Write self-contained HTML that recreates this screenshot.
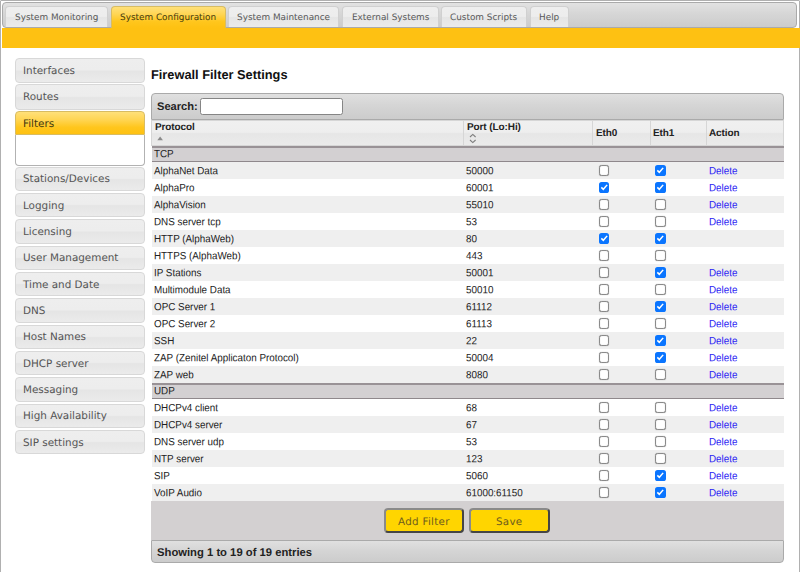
<!DOCTYPE html>
<html lang="en">
<head>
<meta charset="utf-8">
<title>Firewall Filter Settings</title>
<style>
html,body{margin:0;padding:0;background:#fff;}
body{width:800px;height:572px;overflow:hidden;position:relative;font-family:"Liberation Sans",sans-serif;color:#222;}
.v{font-family:"DejaVu Sans","Liberation Sans",sans-serif;}
#wrap{position:absolute;left:0;top:0;width:800px;height:572px;}
.t,.r i,.g span{display:inline-block;transform:matrix(1,0.0007,0,1,0,0);}
.r i,.g span{transform:matrix(1,0.0007,0,1.07,0,0);}
.abs{position:absolute;box-sizing:border-box;}
/* outer widget */
#outer{left:0;top:0;width:800px;height:700px;border:1px solid #b0b0b0;border-radius:1px 1px 0 0;background:#fff;}
/* tab header */
#nav{left:2.2px;top:2.2px;width:795.3px;height:25.6px;border:1px solid #aaa;border-radius:4px;background:linear-gradient(#e2e2e2 0%,#d6d6d6 45%,#cccccc 100%);}
.tab{top:5.8px;height:21.2px;border:1px solid #d0d0d0;border-bottom:0;border-radius:4px 4px 0 0;background:linear-gradient(#eeeeee 0%,#ededed 47%,#e5e5e5 53%,#ebebeb 100%);color:#585858;font-size:8.88px;line-height:11px;padding-top:5.2px;text-align:center;white-space:nowrap;}
.tab.on{top:5.8px;height:22.2px;border-color:#d8bc62;background:linear-gradient(#ffe07a 0%,#ffd553 35%,#ffc61c 70%,#fec112 100%);color:#43390f;padding-top:5.2px;}
#bar{left:2px;top:28px;width:798px;height:20.2px;background:#fec112;}
/* sidebar */
.sh{left:15.3px;width:129.3px;height:24.7px;border:1px solid #d8d8d8;border-radius:4px;background:linear-gradient(#eeeeee 0%,#ededed 47%,#e5e5e5 53%,#ebebeb 100%);color:#555;font-size:10.4px;line-height:13px;padding:4.9px 0 0 7.1px;white-space:nowrap;}
.sh.on{border-color:#d8bc62;border-radius:4px 4px 0 0;background:linear-gradient(#ffe07a 0%,#ffd553 35%,#ffc61c 70%,#fec112 100%);color:#43390f;}
#sc{left:15.3px;top:134.6px;width:129.3px;height:31.1px;border:1px solid #b2b2b2;border-top:0;border-radius:0 0 4px 4px;background:#fff;}
/* main */
#h2{left:150.9px;top:66.5px;font-size:12.8px;font-weight:bold;line-height:15px;color:#111;white-space:nowrap;}
#tb{left:151.3px;top:93.2px;width:632.5px;height:26.4px;border:1px solid #aaa;border-radius:4px 4px 0 0;background:linear-gradient(#e0e0e0 0%,#d5d5d5 45%,#cccccc 100%);}
#tb .lbl{left:4.6px;top:6px;font-size:11.1px;font-weight:bold;line-height:13px;color:#222;}
#tb .inp{left:48.2px;top:3.4px;width:143px;height:17.4px;border:1px solid #858585;border-radius:2.5px;background:#fff;}
#th{left:151.3px;top:119.6px;width:632.5px;height:26.6px;}
.th{top:0;height:26.6px;border:1px solid #d6d6d6;background:linear-gradient(#f0f0f0 0%,#eeeeee 47%,#e6e6e6 53%,#ebebeb 100%);font-size:10px;font-weight:bold;color:#222;line-height:12px;padding-left:2.4px;letter-spacing:-0.1px;white-space:nowrap;}
#rows{left:152px;top:146.2px;width:631.8px;}
.g{position:relative;box-sizing:border-box;height:15.8px;border-top:2px solid #999296;border-bottom:1px solid #8f888c;background:#d3d0d2;font-size:9.86px;line-height:12.7px;padding-left:2.4px;color:#222;}
.g span{position:relative;top:-0.4px;}
.r{position:relative;height:17px;font-size:9.86px;line-height:17px;color:#222;white-space:nowrap;}
.r.o{background:#efefef;}
.r i{position:absolute;top:0.4px;font-style:normal;}
.r .c1{left:2.2px;}
.r .c2{left:313.8px;}
.r .c5{left:557px;color:#2a1df4;}
.cb{position:absolute;box-sizing:border-box;top:3.4px;width:10.4px;height:10.4px;border:1px solid #8a8a8a;border-radius:2.6px;background:#fff;box-shadow:0 0 0.8px rgba(110,110,110,.75),inset 0 0 0.8px rgba(110,110,110,.75);}
.cb.e0{left:446.9px;}
.cb.e1{left:503.2px;}
.cb.k{border:0;background:#0a75ff;box-shadow:none;}
.cb.k svg{position:absolute;left:0;top:0;width:10.4px;height:10.4px;}
#ba{left:151.3px;top:500.8px;width:632.5px;height:39.6px;background:#d3d0d1;}
.btn{top:7.6px;height:25px;border:2px solid;border-color:#8a8a8a #454545 #454545 #8a8a8a;border-radius:4px;background:#ffd500;color:#6e5c1e;font-size:10.3px;letter-spacing:0.3px;line-height:12px;text-align:center;padding-top:4.6px;white-space:nowrap;}
#ft{left:151.3px;top:540.2px;width:632.5px;height:22.7px;border:1px solid #aaa;border-radius:0 0 4px 4px;background:linear-gradient(#e0e0e0 0%,#d5d5d5 45%,#cccccc 100%);font-size:11.25px;font-weight:bold;line-height:13px;color:#222;padding:5.2px 0 0 4.6px;white-space:nowrap;}
</style>
</head>
<body>
<div id="wrap">
<div id="outer" class="abs"></div>
<div id="nav" class="abs"></div>
<div class="abs tab v" style="left:5.2px;width:102.6px"><span class="t">System Monitoring</span></div>
<div class="abs tab on v" style="left:110.6px;width:115.4px"><span class="t">System Configuration</span></div>
<div class="abs tab v" style="left:228.4px;width:111px"><span class="t">System Maintenance</span></div>
<div class="abs tab v" style="left:341.8px;width:97.2px"><span class="t">External Systems</span></div>
<div class="abs tab v" style="left:440.8px;width:86.4px"><span class="t">Custom Scripts</span></div>
<div class="abs tab v" style="left:529.6px;width:39.4px"><span class="t">Help</span></div>
<div id="bar" class="abs"></div>

<div class="abs sh v" style="top:58.3px"><span class="t">Interfaces</span></div>
<div class="abs sh v" style="top:84.4px;height:25.2px"><span class="t">Routes</span></div>
<div class="abs sh on v" style="top:110.8px"><span class="t">Filters</span></div>
<div id="sc" class="abs"></div>
<div class="abs sh v" style="top:166.5px"><span class="t">Stations/Devices</span></div>
<div class="abs sh v" style="top:192.8px"><span class="t">Logging</span></div>
<div class="abs sh v" style="top:219.2px"><span class="t">Licensing</span></div>
<div class="abs sh v" style="top:245.5px"><span class="t">User Management</span></div>
<div class="abs sh v" style="top:271.8px"><span class="t">Time and Date</span></div>
<div class="abs sh v" style="top:298.1px"><span class="t">DNS</span></div>
<div class="abs sh v" style="top:324.5px"><span class="t">Host Names</span></div>
<div class="abs sh v" style="top:350.8px"><span class="t">DHCP server</span></div>
<div class="abs sh v" style="top:377.1px"><span class="t">Messaging</span></div>
<div class="abs sh v" style="top:403.5px"><span class="t">High Availability</span></div>
<div class="abs sh v" style="top:429.8px"><span class="t">SIP settings</span></div>

<div id="h2" class="abs"><span class="t">Firewall Filter Settings</span></div>
<div id="tb" class="abs"><span class="abs lbl"><span class="t">Search:</span></span><span class="abs inp"></span></div>
<div id="th" class="abs">
<div class="abs th" style="left:0;width:312.6px;padding-top:0.2px"><span class="t">Protocol</span></div>
<div class="abs th" style="left:312.1px;width:129.6px;padding-top:0.2px"><span class="t">Port (Lo:Hi)</span></div>
<div class="abs th" style="left:441.2px;width:58.2px;padding-top:6.7px"><span class="t">Eth0</span></div>
<div class="abs th" style="left:498.9px;width:56.6px;padding-top:6.7px;padding-left:1.6px"><span class="t">Eth1</span></div>
<div class="abs th" style="left:555px;width:77.5px;padding-top:6.7px;padding-left:1.6px"><span class="t">Action</span></div>
<svg class="abs" style="left:0;top:-0.2px;width:632.5px;height:26.8px" viewBox="0 0 632.5 26.8"><path d="M9.1 17.5 L11.9 21.3 L6.3 21.3 Z" fill="#8a8a8a"/><path d="M319 18 L321.8 15.4 L324.6 18 M319 21 L321.8 23.6 L324.6 21" fill="none" stroke="#7d7d7d" stroke-width="1.1"/></svg>
</div>
<div id="rows" class="abs">
<div class="g"><span>TCP</span></div>
<div class="r o"><i class="c1">AlphaNet Data</i><i class="c2">50000</i><b class="cb e0"></b><b class="cb e1 k"><svg viewBox="0 0 13 13"><path d="M2.9 6.7 L5.4 9.2 L10.2 3.6" fill="none" stroke="#fff" stroke-width="1.9" stroke-linecap="butt" stroke-linejoin="miter"/></svg></b><i class="c5">Delete</i></div>
<div class="r"><i class="c1">AlphaPro</i><i class="c2">60001</i><b class="cb e0 k"><svg viewBox="0 0 13 13"><path d="M2.9 6.7 L5.4 9.2 L10.2 3.6" fill="none" stroke="#fff" stroke-width="1.9" stroke-linecap="butt" stroke-linejoin="miter"/></svg></b><b class="cb e1 k"><svg viewBox="0 0 13 13"><path d="M2.9 6.7 L5.4 9.2 L10.2 3.6" fill="none" stroke="#fff" stroke-width="1.9" stroke-linecap="butt" stroke-linejoin="miter"/></svg></b><i class="c5">Delete</i></div>
<div class="r o"><i class="c1">AlphaVision</i><i class="c2">55010</i><b class="cb e0"></b><b class="cb e1"></b><i class="c5">Delete</i></div>
<div class="r"><i class="c1">DNS server tcp</i><i class="c2">53</i><b class="cb e0"></b><b class="cb e1"></b><i class="c5">Delete</i></div>
<div class="r o"><i class="c1">HTTP (AlphaWeb)</i><i class="c2">80</i><b class="cb e0 k"><svg viewBox="0 0 13 13"><path d="M2.9 6.7 L5.4 9.2 L10.2 3.6" fill="none" stroke="#fff" stroke-width="1.9" stroke-linecap="butt" stroke-linejoin="miter"/></svg></b><b class="cb e1 k"><svg viewBox="0 0 13 13"><path d="M2.9 6.7 L5.4 9.2 L10.2 3.6" fill="none" stroke="#fff" stroke-width="1.9" stroke-linecap="butt" stroke-linejoin="miter"/></svg></b></div>
<div class="r"><i class="c1">HTTPS (AlphaWeb)</i><i class="c2">443</i><b class="cb e0"></b><b class="cb e1"></b></div>
<div class="r o"><i class="c1">IP Stations</i><i class="c2">50001</i><b class="cb e0"></b><b class="cb e1 k"><svg viewBox="0 0 13 13"><path d="M2.9 6.7 L5.4 9.2 L10.2 3.6" fill="none" stroke="#fff" stroke-width="1.9" stroke-linecap="butt" stroke-linejoin="miter"/></svg></b><i class="c5">Delete</i></div>
<div class="r"><i class="c1">Multimodule Data</i><i class="c2">50010</i><b class="cb e0"></b><b class="cb e1"></b><i class="c5">Delete</i></div>
<div class="r o"><i class="c1">OPC Server 1</i><i class="c2">61112</i><b class="cb e0"></b><b class="cb e1 k"><svg viewBox="0 0 13 13"><path d="M2.9 6.7 L5.4 9.2 L10.2 3.6" fill="none" stroke="#fff" stroke-width="1.9" stroke-linecap="butt" stroke-linejoin="miter"/></svg></b><i class="c5">Delete</i></div>
<div class="r"><i class="c1">OPC Server 2</i><i class="c2">61113</i><b class="cb e0"></b><b class="cb e1"></b><i class="c5">Delete</i></div>
<div class="r o"><i class="c1">SSH</i><i class="c2">22</i><b class="cb e0"></b><b class="cb e1 k"><svg viewBox="0 0 13 13"><path d="M2.9 6.7 L5.4 9.2 L10.2 3.6" fill="none" stroke="#fff" stroke-width="1.9" stroke-linecap="butt" stroke-linejoin="miter"/></svg></b><i class="c5">Delete</i></div>
<div class="r"><i class="c1">ZAP (Zenitel Applicaton Protocol)</i><i class="c2">50004</i><b class="cb e0"></b><b class="cb e1 k"><svg viewBox="0 0 13 13"><path d="M2.9 6.7 L5.4 9.2 L10.2 3.6" fill="none" stroke="#fff" stroke-width="1.9" stroke-linecap="butt" stroke-linejoin="miter"/></svg></b><i class="c5">Delete</i></div>
<div class="r o"><i class="c1">ZAP web</i><i class="c2">8080</i><b class="cb e0"></b><b class="cb e1"></b><i class="c5">Delete</i></div>
<div class="g"><span>UDP</span></div>
<div class="r"><i class="c1">DHCPv4 client</i><i class="c2">68</i><b class="cb e0"></b><b class="cb e1"></b><i class="c5">Delete</i></div>
<div class="r o"><i class="c1">DHCPv4 server</i><i class="c2">67</i><b class="cb e0"></b><b class="cb e1"></b><i class="c5">Delete</i></div>
<div class="r"><i class="c1">DNS server udp</i><i class="c2">53</i><b class="cb e0"></b><b class="cb e1"></b><i class="c5">Delete</i></div>
<div class="r o"><i class="c1">NTP server</i><i class="c2">123</i><b class="cb e0"></b><b class="cb e1"></b><i class="c5">Delete</i></div>
<div class="r"><i class="c1">SIP</i><i class="c2">5060</i><b class="cb e0"></b><b class="cb e1 k"><svg viewBox="0 0 13 13"><path d="M2.9 6.7 L5.4 9.2 L10.2 3.6" fill="none" stroke="#fff" stroke-width="1.9" stroke-linecap="butt" stroke-linejoin="miter"/></svg></b><i class="c5">Delete</i></div>
<div class="r o"><i class="c1">VoIP Audio</i><i class="c2">61000:61150</i><b class="cb e0"></b><b class="cb e1 k"><svg viewBox="0 0 13 13"><path d="M2.9 6.7 L5.4 9.2 L10.2 3.6" fill="none" stroke="#fff" stroke-width="1.9" stroke-linecap="butt" stroke-linejoin="miter"/></svg></b><i class="c5">Delete</i></div>
</div>
<div id="ba" class="abs">
<div class="abs btn v" style="left:233px;width:80px"><span class="t">Add Filter</span></div>
<div class="abs btn v" style="left:318.2px;width:80.2px"><span class="t">Save</span></div>
</div>
<div id="ft" class="abs"><span class="t">Showing 1 to 19 of 19 entries</span></div>
</div>
</body>
</html>
